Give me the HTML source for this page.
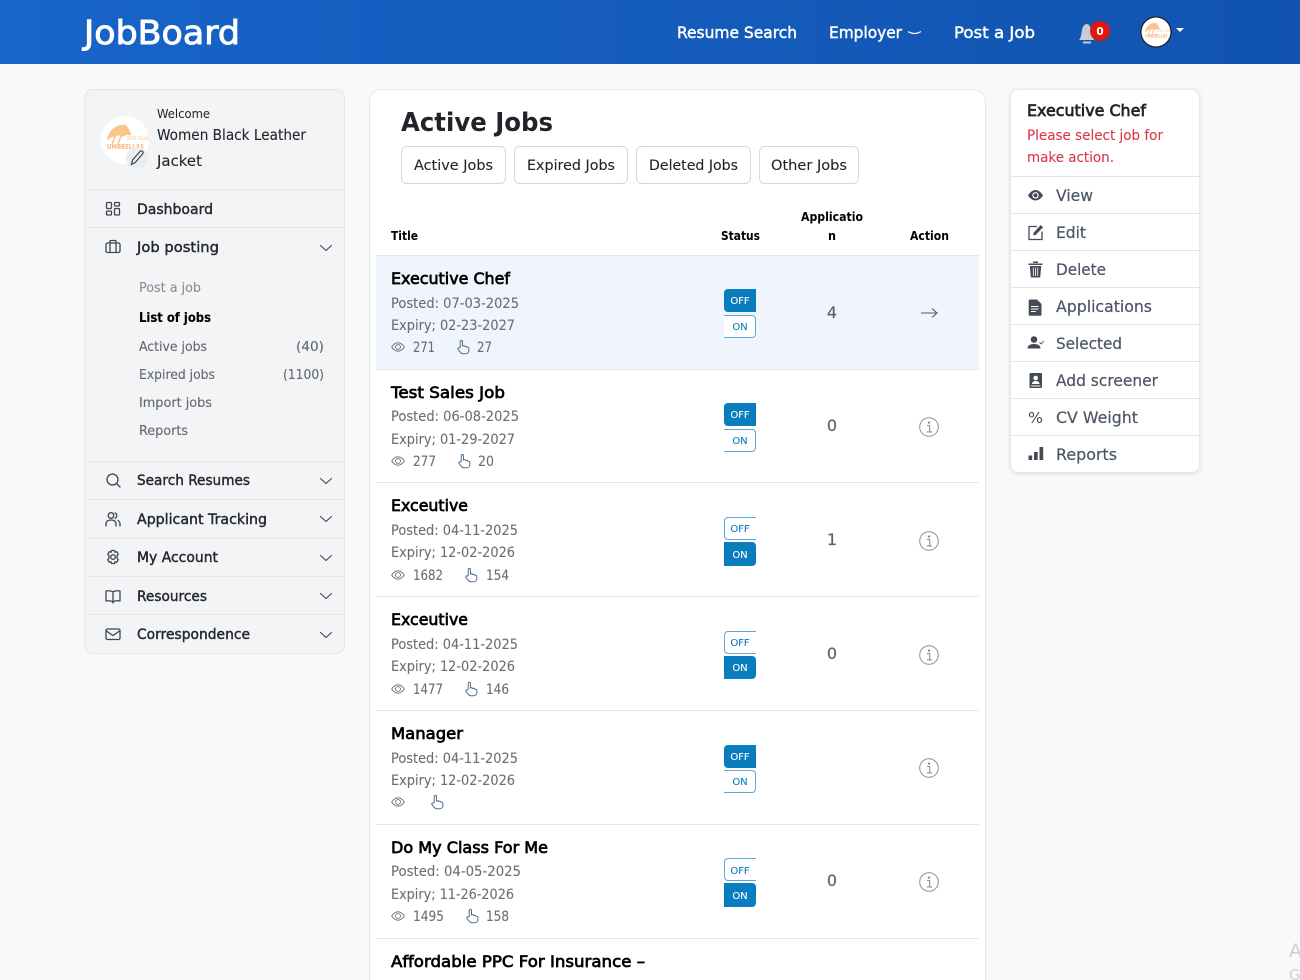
<!DOCTYPE html>
<html lang="en"><head><meta charset="utf-8"><title>JobBoard - Active Jobs</title>
<style>
html,body{margin:0;padding:0;background:#f9f9f9;width:1300px;height:980px;overflow:hidden}
svg{display:block}
text{font-family:"DejaVu Sans","Liberation Sans",sans-serif;white-space:pre}
.w{fill:#fff;font-size:16px;stroke:#fff;stroke-width:.45}
.d{fill:#23272e;font-size:14px;stroke:#23272e;stroke-width:.4}
.m{fill:#212529;font-size:14.5px;stroke:#212529;stroke-width:.1}
.s{fill:#63676f;font-size:13px;stroke:#63676f;stroke-width:.12}
.h{fill:#000;font-size:12px;font-weight:bold}
.t{fill:#000;font-size:16px;stroke:#000;stroke-width:.7}
.p{fill:#6a6f77;font-size:14px;stroke:#6a6f77;stroke-width:.1}
.r{fill:#4b5563;font-size:16px;stroke:#4b5563;stroke-width:.2}
.n{fill:#5d636c;font-size:16px;text-anchor:middle;stroke:#5d636c;stroke-width:.2}
.tg{font-size:10px;text-anchor:middle;stroke-width:.1}
.ic{fill:none;stroke:#3f4650;stroke-width:1.3;stroke-linecap:round;stroke-linejoin:round}
.ln{stroke:#e4e6ea;stroke-width:1}
</style></head><body>
<svg xmlns="http://www.w3.org/2000/svg" width="1300" height="980" viewBox="0 0 1300 980">
<defs>
<linearGradient id="hd" x1="0" x2="1" y1="0" y2="0"><stop offset="0" stop-color="#1864c9"/><stop offset="1" stop-color="#1153af"/></linearGradient>
<filter id="sh" x="-10%" y="-10%" width="120%" height="120%"><feDropShadow dx="0" dy="1" stdDeviation="2" flood-color="#000" flood-opacity=".12"/></filter>
<symbol id="eye" viewBox="0 0 16 16"><path fill="none" stroke="#5f6b78" stroke-width="1" d="M.8 8S3.5 3.2 8 3.2 15.2 8 15.2 8 12.5 12.8 8 12.8.8 8 .8 8Z"/><circle cx="8" cy="8" r="2.800" fill="none" stroke="#5f6b78" stroke-width="1"/></symbol>
<symbol id="hand" viewBox="0 0 16 16"><path fill="none" stroke="#56708c" stroke-width="1.100" stroke-linejoin="round" stroke-linecap="round" d="M4.500 8.500V2.200a1.200 1.200 0 0 1 2.400 0V7c.9-.7 2.100-.4 2.400.5.900-.5 2-.1 2.200.7.900-.3 2.200.2 2.200 1.300v2.200c0 2-1.400 3.500-3.400 3.500H7.300c-1.200 0-2-.5-2.700-1.500L2 10.500c-.5-1 .6-2 1.500-1.300Z"/></symbol>
<symbol id="info" viewBox="0 0 20 20"><circle cx="10" cy="10" r="9.300" fill="none" stroke="#8b8f94" stroke-width="1"/><circle cx="10" cy="5.600" r="1.200" fill="#8b8f94"/><path d="M8 8.500h2.700v6.200M8 14.900h5" fill="none" stroke="#8b8f94" stroke-width="1.100"/></symbol>
<symbol id="chev" viewBox="0 0 12 6"><path d="M.5.500 6 5.500 11.500.5" fill="none" stroke="#3f4650" stroke-width="1.100" stroke-linecap="round" stroke-linejoin="round"/></symbol>
<symbol id="logo" viewBox="0 0 48 48">
<circle cx="24" cy="24" r="24" fill="#fff"/>
<path d="M6 25C7 14 15 8 25 9c3 4 5 7 5 11-3-2-6-1-8 1-3-2-6-2-8 0-3-1-5 1-8 4Z" fill="#fac58a"/>
<path d="M14 20l-3 9M23 12l-6 16" stroke="#fac58a" stroke-width="1.500" fill="none"/>
<text x="25" y="24" font-size="6" fill="#f8c48d" style="font-family:'Liberation Serif',serif;font-style:italic">SOS Cutlers</text>
<text x="6" y="33" font-size="7" font-weight="bold" fill="#f5b77c" textLength="37" lengthAdjust="spacingAndGlyphs">UMBRELLAS</text>
</symbol>
</defs>

<!-- Header -->
<rect width="1300" height="64" fill="url(#hd)"/>
<text x="84" y="44" textLength="156" lengthAdjust="spacingAndGlyphs" style="font-size:33px;fill:#fff;stroke:#fff;stroke-width:.9">JobBoard</text>
<text class="w" x="677" y="38" textLength="120" lengthAdjust="spacingAndGlyphs">Resume Search</text>
<text class="w" x="829" y="38" textLength="73" lengthAdjust="spacingAndGlyphs">Employer</text>
<path d="M908 31.500q6.500 4 13 0" fill="none" stroke="#fff" stroke-width="1.200"/>
<text class="w" x="954" y="38" textLength="81" lengthAdjust="spacingAndGlyphs">Post a Job</text>
<path d="M1079 40c2-2 2-5 3-10 .5-4 3-6 5-6s3 2 4 6l3 10Z" fill="#c9cdd2"/><rect x="1083" y="41.500" width="8" height="2" fill="#c9cdd2"/>
<circle cx="1100" cy="31" r="10" fill="#e0170f"/>
<text x="1100" y="35" text-anchor="middle" style="font-size:10.500px;font-weight:bold;fill:#fff">0</text>
<circle cx="1156" cy="32" r="15.500" fill="#111"/><use href="#logo" x="1141.500" y="17.500" width="29" height="29"/>
<path d="M1176 28h8l-4 4Z" fill="#fff"/>

<!-- Sidebar -->
<rect x="85" y="89.500" width="259.500" height="564" rx="8" fill="#f3f4f6" stroke="#e2e5ea"/>
<text x="157" y="118" textLength="53" lengthAdjust="spacingAndGlyphs" style="font-size:12.500px;fill:#212529">Welcome</text>
<text x="157" y="140" textLength="149" lengthAdjust="spacingAndGlyphs" style="font-size:15px;fill:#212529;stroke:#212529;stroke-width:.1">Women Black Leather</text>
<text x="157" y="166" textLength="45" lengthAdjust="spacingAndGlyphs" style="font-size:15px;fill:#212529;stroke:#212529;stroke-width:.1">Jacket</text>
<use href="#logo" x="101" y="116" width="48" height="48"/>
<circle cx="137" cy="158" r="11" fill="#ecedef"/>
<path d="M131.500 164.500l1-4.500 7.500-8.500c.8-.8 1.900-.8 2.600-.1s.7 1.800 0 2.500l-7.300 8.600Z" fill="none" stroke="#2c3a55" stroke-width="1.100"/>
<path class="ln" d="M85 189.500h259M85 227.500h259M85 461.500h259M85 499.500h259M85 538.500h259M85 576.500h259M85 614.500h259"/>

<g class="ic">
<rect x="106.500" y="202.500" width="5" height="6" rx="1"/><rect x="114.500" y="202.500" width="5" height="3.500" rx="1"/><rect x="106.500" y="211" width="5" height="4" rx="1"/><rect x="114.500" y="208.500" width="5" height="6.500" rx="1"/>
<rect x="106" y="243" width="14" height="9.500" rx="1.500"/><path d="M110 243v-1.500a1 1 0 0 1 1-1h4a1 1 0 0 1 1 1V243M110 243v9.500M116 243v9.500"/>
<circle cx="112.500" cy="479.500" r="5.500"/><path d="M116.500 483.500l3.500 3.500"/>
<circle cx="111" cy="515.500" r="2.800"/><path d="M106 526v-2c0-2.500 2-4 5-4s5 1.500 5 4v2M115 513c2 .2 2.500 4.500 0 5.200M118 520.500c1.200.7 2 1.800 2 3.500v2"/>
<circle cx="113" cy="557" r="2.300"/><path d="M111.500 550.500h3l.5 1.800 1.800-.6 1.500 2.600-1.300 1.300v2.800l1.300 1.300-1.500 2.600-1.800-.6-.5 1.800h-3l-.5-1.800-1.800.6-1.500-2.600 1.300-1.300v-2.800l-1.300-1.300 1.500-2.600 1.800.6Z"/>
<path d="M113 592c-2-1.500-4-1.500-7-1v10c3-.5 5-.5 7 1 2-1.500 4-1.500 7-1v-10c-3-.5-5-.5-7 1Zm0 0v11"/>
<rect x="106" y="629" width="14" height="10.500" rx="1.500"/><path d="M106.500 631l6.500 4.500 6.500-4.500"/>
</g>

<text class="d" x="137" y="214" textLength="76" lengthAdjust="spacingAndGlyphs">Dashboard</text>
<text class="d" x="137" y="252" textLength="82" lengthAdjust="spacingAndGlyphs">Job posting</text>
<text class="d" x="137" y="485" textLength="113" lengthAdjust="spacingAndGlyphs">Search Resumes</text>
<text class="d" x="137" y="524" textLength="130" lengthAdjust="spacingAndGlyphs">Applicant Tracking</text>
<text class="d" x="137" y="562" textLength="81" lengthAdjust="spacingAndGlyphs">My Account</text>
<text class="d" x="137" y="601" textLength="70" lengthAdjust="spacingAndGlyphs">Resources</text>
<text class="d" x="137" y="639" textLength="113" lengthAdjust="spacingAndGlyphs">Correspondence</text>
<use href="#chev" x="320" y="245" width="12" height="6"/>
<use href="#chev" x="320" y="478" width="12" height="6"/>
<use href="#chev" x="320" y="516" width="12" height="6"/>
<use href="#chev" x="320" y="555" width="12" height="6"/>
<use href="#chev" x="320" y="593" width="12" height="6"/>
<use href="#chev" x="320" y="632" width="12" height="6"/>

<text class="s" x="139" y="292" textLength="62" lengthAdjust="spacingAndGlyphs" style="fill:#8b8e94;stroke:#8b8e94">Post a job</text>
<text class="s" x="139" y="322" textLength="72" lengthAdjust="spacingAndGlyphs" style="fill:#000;stroke:#000;font-weight:bold">List of jobs</text>
<text class="s" x="139" y="351" textLength="68" lengthAdjust="spacingAndGlyphs">Active jobs</text>
<text class="s" x="296" y="351" textLength="28" lengthAdjust="spacingAndGlyphs">(40)</text>
<text class="s" x="139" y="379" textLength="76" lengthAdjust="spacingAndGlyphs">Expired jobs</text>
<text class="s" x="283" y="379" textLength="41" lengthAdjust="spacingAndGlyphs">(1100)</text>
<text class="s" x="139" y="407" textLength="73" lengthAdjust="spacingAndGlyphs">Import jobs</text>
<text class="s" x="139" y="435" textLength="49" lengthAdjust="spacingAndGlyphs">Reports</text>

<!-- Main card -->
<rect x="369.500" y="89.500" width="616" height="920" rx="12" fill="#fff" stroke="#e6e8ec"/>
<text x="401" y="131" textLength="152" lengthAdjust="spacingAndGlyphs" style="font-size:26px;fill:#212529;font-weight:bold">Active Jobs</text>
<g fill="#fff" stroke="#d5d8de">
<rect x="401.500" y="146.500" width="104" height="37" rx="5"/><rect x="514.500" y="146.500" width="113" height="37" rx="5"/><rect x="636.500" y="146.500" width="114" height="37" rx="5"/><rect x="759.500" y="146.500" width="99" height="37" rx="5"/>
</g>
<text class="m" x="414" y="170" textLength="79" lengthAdjust="spacingAndGlyphs">Active Jobs</text>
<text class="m" x="527" y="170" textLength="88" lengthAdjust="spacingAndGlyphs">Expired Jobs</text>
<text class="m" x="649" y="170" textLength="89" lengthAdjust="spacingAndGlyphs">Deleted Jobs</text>
<text class="m" x="771" y="170" textLength="76" lengthAdjust="spacingAndGlyphs">Other Jobs</text>

<text class="h" x="391" y="240" textLength="27" lengthAdjust="spacingAndGlyphs">Title</text>
<text class="h" x="721" y="240" textLength="39" lengthAdjust="spacingAndGlyphs">Status</text>
<text class="h" x="801" y="221" textLength="62" lengthAdjust="spacingAndGlyphs">Applicatio</text>
<text class="h" x="828" y="240" textLength="8" lengthAdjust="spacingAndGlyphs">n</text>
<text class="h" x="910" y="240" textLength="39" lengthAdjust="spacingAndGlyphs">Action</text>

<rect x="376" y="256" width="603" height="113" fill="#eff4fd"/>
<path class="ln" d="M376 255.500h603M376 369.500h603M376 482.500h603M376 596.500h603M376 710.500h603M376 824.500h603M376 938.500h603"/>

<!-- Rows text -->
<text class="t" x="391" y="284" textLength="119" lengthAdjust="spacingAndGlyphs">Executive Chef</text>
<text class="p" x="391" y="308" textLength="128" lengthAdjust="spacingAndGlyphs">Posted: 07-03-2025</text>
<text class="p" x="391" y="330" textLength="124" lengthAdjust="spacingAndGlyphs">Expiry; 02-23-2027</text>
<use href="#eye" x="391" y="340" width="14" height="14"/><text class="p" x="413" y="352" textLength="22" lengthAdjust="spacingAndGlyphs">271</text>
<use href="#hand" x="456" y="339" width="15" height="16"/><text class="p" x="477" y="352" textLength="15" lengthAdjust="spacingAndGlyphs">27</text>

<text class="t" x="391" y="398" textLength="114" lengthAdjust="spacingAndGlyphs">Test Sales Job</text>
<text class="p" x="391" y="421" textLength="128" lengthAdjust="spacingAndGlyphs">Posted: 06-08-2025</text>
<text class="p" x="391" y="444" textLength="124" lengthAdjust="spacingAndGlyphs">Expiry; 01-29-2027</text>
<use href="#eye" x="391" y="454" width="14" height="14"/><text class="p" x="413" y="466" textLength="23" lengthAdjust="spacingAndGlyphs">277</text>
<use href="#hand" x="457" y="453" width="15" height="16"/><text class="p" x="478" y="466" textLength="16" lengthAdjust="spacingAndGlyphs">20</text>

<text class="t" x="391" y="511" textLength="77" lengthAdjust="spacingAndGlyphs">Exceutive</text>
<text class="p" x="391" y="535" textLength="127" lengthAdjust="spacingAndGlyphs">Posted: 04-11-2025</text>
<text class="p" x="391" y="557" textLength="124" lengthAdjust="spacingAndGlyphs">Expiry; 12-02-2026</text>
<use href="#eye" x="391" y="568" width="14" height="14"/><text class="p" x="413" y="580" textLength="30" lengthAdjust="spacingAndGlyphs">1682</text>
<use href="#hand" x="464" y="567" width="15" height="16"/><text class="p" x="486" y="580" textLength="23" lengthAdjust="spacingAndGlyphs">154</text>

<text class="t" x="391" y="625" textLength="77" lengthAdjust="spacingAndGlyphs">Exceutive</text>
<text class="p" x="391" y="649" textLength="127" lengthAdjust="spacingAndGlyphs">Posted: 04-11-2025</text>
<text class="p" x="391" y="671" textLength="124" lengthAdjust="spacingAndGlyphs">Expiry; 12-02-2026</text>
<use href="#eye" x="391" y="682" width="14" height="14"/><text class="p" x="413" y="694" textLength="30" lengthAdjust="spacingAndGlyphs">1477</text>
<use href="#hand" x="464" y="681" width="15" height="16"/><text class="p" x="486" y="694" textLength="23" lengthAdjust="spacingAndGlyphs">146</text>

<text class="t" x="391" y="739" textLength="72" lengthAdjust="spacingAndGlyphs">Manager</text>
<text class="p" x="391" y="763" textLength="127" lengthAdjust="spacingAndGlyphs">Posted: 04-11-2025</text>
<text class="p" x="391" y="785" textLength="124" lengthAdjust="spacingAndGlyphs">Expiry; 12-02-2026</text>
<use href="#eye" x="391" y="795" width="14" height="14"/>
<use href="#hand" x="430" y="794" width="15" height="16"/>

<text class="t" x="391" y="853" textLength="157" lengthAdjust="spacingAndGlyphs">Do My Class For Me</text>
<text class="p" x="391" y="876" textLength="130" lengthAdjust="spacingAndGlyphs">Posted: 04-05-2025</text>
<text class="p" x="391" y="899" textLength="123" lengthAdjust="spacingAndGlyphs">Expiry; 11-26-2026</text>
<use href="#eye" x="391" y="909" width="14" height="14"/><text class="p" x="413" y="921" textLength="31" lengthAdjust="spacingAndGlyphs">1495</text>
<use href="#hand" x="465" y="908" width="15" height="16"/><text class="p" x="486" y="921" textLength="23" lengthAdjust="spacingAndGlyphs">158</text>

<text class="t" x="391" y="967" textLength="254" lengthAdjust="spacingAndGlyphs">Affordable PPC For Insurance –</text>
<text class="p" x="391" y="992" textLength="128" lengthAdjust="spacingAndGlyphs">Posted: 04-05-2025</text>

<!-- Numbers -->
<text class="n" x="832" y="318">4</text><text class="n" x="832" y="431">0</text><text class="n" x="832" y="545">1</text><text class="n" x="832" y="659">0</text><text class="n" x="832" y="886">0</text>

<!-- Actions -->
<path d="M921 313h16M932 308.500l5 4.500-5 4.500" fill="none" stroke="#555a60" stroke-width="1.100"/>
<use href="#info" x="919" y="417" width="20" height="20"/>
<use href="#info" x="919" y="531" width="20" height="20"/>
<use href="#info" x="919" y="645" width="20" height="20"/>
<use href="#info" x="919" y="758" width="20" height="20"/>
<use href="#info" x="919" y="872" width="20" height="20"/>

<!-- Toggles -->
<g id="toggles">
<path d="M724 293a4 4 0 0 1 4-4h28v23h-28a4 4 0 0 1-4-4Z" fill="#0a7dbf"/>
<text class="tg" x="740" y="304" fill="#fff" stroke="#fff">OFF</text>
<path d="M724 315.500h28a3.500 3.500 0 0 1 3.500 3.500v15a3.500 3.500 0 0 1-3.500 3.500h-28" fill="#fff" stroke="#5aa9d8"/>
<text class="tg" x="740" y="330" fill="#0a7dbf" stroke="#0a7dbf">ON</text>

<path d="M724 407a4 4 0 0 1 4-4h28v23h-28a4 4 0 0 1-4-4Z" fill="#0a7dbf"/>
<text class="tg" x="740" y="418" fill="#fff" stroke="#fff">OFF</text>
<path d="M724 429.500h28a3.500 3.500 0 0 1 3.500 3.500v15a3.500 3.500 0 0 1-3.500 3.500h-28" fill="#fff" stroke="#5aa9d8"/>
<text class="tg" x="740" y="444" fill="#0a7dbf" stroke="#0a7dbf">ON</text>

<path d="M756 517.500h-28a3.500 3.500 0 0 0-3.500 3.500v15a3.500 3.500 0 0 0 3.500 3.500h28" fill="#fff" stroke="#5aa9d8"/>
<text class="tg" x="740" y="532" fill="#0a7dbf" stroke="#0a7dbf">OFF</text>
<path d="M724 542h28a4 4 0 0 1 4 4v16a4 4 0 0 1-4 4h-28Z" fill="#0a7dbf"/>
<text class="tg" x="740" y="558" fill="#fff" stroke="#fff">ON</text>

<path d="M756 631.500h-28a3.500 3.500 0 0 0-3.500 3.500v15a3.500 3.500 0 0 0 3.500 3.500h28" fill="#fff" stroke="#5aa9d8"/>
<text class="tg" x="740" y="646" fill="#0a7dbf" stroke="#0a7dbf">OFF</text>
<path d="M724 656h28a4 4 0 0 1 4 4v15a4 4 0 0 1-4 4h-28Z" fill="#0a7dbf"/>
<text class="tg" x="740" y="671" fill="#fff" stroke="#fff">ON</text>

<path d="M724 749a4 4 0 0 1 4-4h28v23h-28a4 4 0 0 1-4-4Z" fill="#0a7dbf"/>
<text class="tg" x="740" y="760" fill="#fff" stroke="#fff">OFF</text>
<path d="M724 770.500h28a3.500 3.500 0 0 1 3.500 3.500v15a3.500 3.500 0 0 1-3.500 3.500h-28" fill="#fff" stroke="#5aa9d8"/>
<text class="tg" x="740" y="785" fill="#0a7dbf" stroke="#0a7dbf">ON</text>

<path d="M756 858.500h-28a3.500 3.500 0 0 0-3.500 3.500v15a3.500 3.500 0 0 0 3.500 3.500h28" fill="#fff" stroke="#5aa9d8"/>
<text class="tg" x="740" y="874" fill="#0a7dbf" stroke="#0a7dbf">OFF</text>
<path d="M724 883h28a4 4 0 0 1 4 4v16a4 4 0 0 1-4 4h-28Z" fill="#0a7dbf"/>
<text class="tg" x="740" y="899" fill="#fff" stroke="#fff">ON</text>
</g>

<!-- Right card -->
<rect x="1010.500" y="89.500" width="189" height="383" rx="8" fill="#fff" stroke="#e6e8ec" filter="url(#sh)"/>
<text x="1027" y="116" textLength="119" lengthAdjust="spacingAndGlyphs" style="font-size:16px;fill:#212529;stroke:#212529;stroke-width:.7">Executive Chef</text>
<text x="1027" y="140" textLength="136" lengthAdjust="spacingAndGlyphs" style="font-size:14.500px;fill:#dc3545;stroke:#dc3545;stroke-width:.1">Please select job for</text>
<text x="1027" y="162" textLength="87" lengthAdjust="spacingAndGlyphs" style="font-size:14.500px;fill:#dc3545;stroke:#dc3545;stroke-width:.1">make action.</text>
<path d="M1011 176.500h188M1011 213.500h188M1011 250.500h188M1011 287.500h188M1011 324.500h188M1011 361.500h188M1011 398.500h188M1011 435.500h188" stroke="#dfe2e7"/>
<text class="r" x="1056" y="201" textLength="37" lengthAdjust="spacingAndGlyphs">View</text>
<text class="r" x="1056" y="238" textLength="30" lengthAdjust="spacingAndGlyphs">Edit</text>
<text class="r" x="1056" y="275" textLength="50" lengthAdjust="spacingAndGlyphs">Delete</text>
<text class="r" x="1056" y="312" textLength="96" lengthAdjust="spacingAndGlyphs">Applications</text>
<text class="r" x="1056" y="349" textLength="66" lengthAdjust="spacingAndGlyphs">Selected</text>
<text class="r" x="1056" y="386" textLength="102" lengthAdjust="spacingAndGlyphs">Add screener</text>
<text class="r" x="1056" y="423" textLength="82" lengthAdjust="spacingAndGlyphs">CV Weight</text>
<text class="r" x="1056" y="460" textLength="61" lengthAdjust="spacingAndGlyphs">Reports</text>

<g fill="#444b56">
<path d="M1028 195.500s3-5.500 7.500-5.500 7.500 5.500 7.500 5.500-3 5-7.500 5-7.500-5-7.500-5Z"/><circle cx="1035.500" cy="195.300" r="3.200" fill="#fff"/><circle cx="1035.500" cy="195.300" r="2.100"/>
<path d="M1037 226.500h-8v13h13v-8" fill="none" stroke="#444b56" stroke-width="1.300"/><path d="M1033 235.500l.8-3 7-7.500 2.300 2.200-7.200 7.500Z"/>
<path d="M1028.500 263.500h14v1.500h-14ZM1033 263v-1.500h5v1.500ZM1029.800 266h11.400l-1 11.500h-9.400Z"/><path d="M1033.200 267.500l.2 8.500M1035.500 267.500v8.500M1037.800 267.500l-.2 8.500" stroke="#fff" stroke-width=".8"/>
<path d="M1030 299.500h7l4.500 4.500v10.500a1.300 1.300 0 0 1-1.300 1.300h-10.200a1.300 1.300 0 0 1-1.300-1.300V301a1.300 1.300 0 0 1 1.300-1.500Z"/><path d="M1031 306.500h7.500M1031 309h7.500M1031 311.500h5" stroke="#fff" stroke-width=".9"/>
<circle cx="1034" cy="339.500" r="3.300"/><path d="M1027.500 348.500c0-3 2.500-4.500 6.500-4.500s6.500 1.500 6.500 4.500Z"/><path d="M1039.500 342.500l1.700 1.500 2.500-3" fill="none" stroke="#444b56" stroke-width=".9"/>
<rect x="1029.500" y="373" width="12.500" height="15" rx="1.300"/><circle cx="1035.700" cy="378" r="2.300" fill="#fff"/><path d="M1031.800 384c.3-2 2-3 3.900-3s3.600 1 3.900 3Z" fill="#fff"/><path d="M1031 386h9.500" stroke="#fff"/>
<text x="1028" y="423" textLength="15" lengthAdjust="spacingAndGlyphs" style="font-size:15px;fill:#444b56">%</text>
<rect x="1028.500" y="455.500" width="3.700" height="4.500"/><rect x="1034" y="452" width="3.700" height="8"/><rect x="1039.500" y="447" width="3.700" height="13"/>
</g>

<!-- Clipped text at the lower right -->
<text x="1289" y="957" style="font-size:19px;fill:#cfcfcf">A</text>
<text x="1289" y="980" style="font-size:15px;fill:#cfcfcf">G</text>
</svg>
</body></html>
